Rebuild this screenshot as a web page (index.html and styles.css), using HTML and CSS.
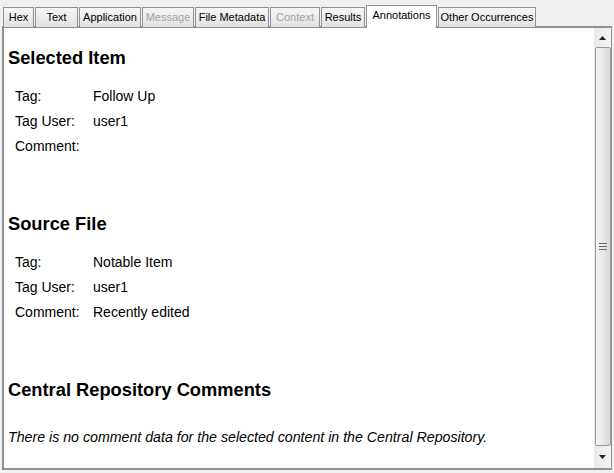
FILE: index.html
```html
<!DOCTYPE html>
<html>
<head>
<meta charset="utf-8">
<link rel="stylesheet" href="styles.css">
</head>
<body>
<div class="tabs">
  <div class="tab t-hex">Hex</div>
  <div class="tab t-text">Text</div>
  <div class="tab t-app">Application</div>
  <div class="tab t-msg disabled">Message</div>
  <div class="tab t-meta">File Metadata</div>
  <div class="tab t-ctx disabled">Context</div>
  <div class="tab t-res">Results</div>
  <div class="tab t-ann selected">Annotations</div>
  <div class="tab t-oth">Other Occurrences</div>
</div>
<div class="panel">
  <div class="content">
    <h2 class="heading first">Selected Item</h2>
    <div class="rows">
      <div class="label">Tag:</div><div class="value">Follow Up</div>
      <div class="label">Tag User:</div><div class="value">user1</div>
      <div class="label">Comment:</div><div class="value"></div>
    </div>
    <h2 class="heading">Source File</h2>
    <div class="rows">
      <div class="label">Tag:</div><div class="value">Notable Item</div>
      <div class="label">Tag User:</div><div class="value">user1</div>
      <div class="label">Comment:</div><div class="value">Recently edited</div>
    </div>
    <h2 class="heading">Central Repository Comments</h2>
    <p class="note">There is no comment data for the selected content in the Central Repository.</p>
  </div>
  <div class="scrollbar">
    <div class="arrow up"><svg width="7" height="4" viewBox="0 0 7 4"><path d="M3.5 0 L7 4 L0 4 Z" fill="#222"/></svg></div>
    <div class="thumb">
      <svg class="grip" width="8" height="7" viewBox="0 0 8 7"><path d="M0 0.5H8M0 3.5H8M0 6.5H8" stroke="#6a6a6a" stroke-width="1"/></svg>
    </div>
    <div class="arrow down"><svg width="7" height="4" viewBox="0 0 7 4"><path d="M0 0 L7 0 L3.5 4 Z" fill="#222"/></svg></div>
  </div>
</div>
</body>
</html>
```
FILE: styles.css
```css
html, body {
  margin: 0;
  padding: 0;
  background: #f0f0f0;
  width: 614px;
  height: 473px;
  overflow: hidden;
  font-family: "Liberation Sans", Arial, sans-serif;
}

.tabs {
  display: flex;
  align-items: flex-end;
  height: 26px;
  padding-left: 3px;
  position: relative;
  z-index: 2;
}

.tab {
  box-sizing: border-box;
  height: 20px;
  margin-right: 1px;
  border: 1px solid #8f9296;
  border-bottom: none;
  background: linear-gradient(#f6f6f6, #e2e2e2);
  font-size: 11px;
  line-height: 18px;
  text-align: center;
  color: #000;
  white-space: nowrap;
  margin-bottom: -1px;
}

.tab.disabled { color: #a3a3a3; }

.tab.selected {
  height: 23px;
  background: #fff;
  line-height: 19px;
  margin-bottom: -2px;
  border-color: #8f9296;
  padding-bottom: 2px;
}

.t-hex { width: 31px; }
.t-text { width: 43px; }
.t-app { width: 62px; }
.t-msg { width: 52px; }
.t-meta { width: 74px; }
.t-ctx { width: 50px; }
.t-res { width: 44px; }
.t-ann { width: 71px; }
.t-oth { width: 98px; }

.panel {
  box-sizing: border-box;
  margin-left: 2px;
  width: 610px;
  height: 444px;
  border: 2px solid #8c8f94;
  background: #fff;
  display: flex;
  position: relative;
  z-index: 1;
}

.content {
  flex: 1;
  padding-left: 4px;
  padding-top: 19px;
}

.heading {
  margin: 54px 0 0 0;
  font-size: 18.3px;
  line-height: 22px;
  font-weight: bold;
  color: #000;
}

.heading.first { margin-top: 0; }

.rows {
  display: grid;
  grid-template-columns: 78px auto;
  margin-top: 15px;
  padding-left: 7px;
  font-size: 14px;
  line-height: 25px;
  color: #000;
}

.note {
  margin: 26px 0 0 0;
  font-size: 14.2px;
  line-height: 20px;
  font-style: italic;
  color: #000;
}

.scrollbar {
  width: 17px;
  display: flex;
  flex-direction: column;
  background: linear-gradient(90deg, #e8e8e8, #f4f4f4);
  margin-right: -1px;
}

.arrow {
  height: 19px;
  display: flex;
  align-items: center;
  justify-content: center;
}

.arrow.down { height: 22px; }

.thumb {
  flex: 1;
  margin: 0 0 0 1px;
  border: 1px solid #9a9a9a;
  border-radius: 2px;
  background: linear-gradient(90deg, #f4f4f4, #e6e6e6 60%, #d6d6d6);
  display: flex;
  align-items: center;
  justify-content: center;
}
```
